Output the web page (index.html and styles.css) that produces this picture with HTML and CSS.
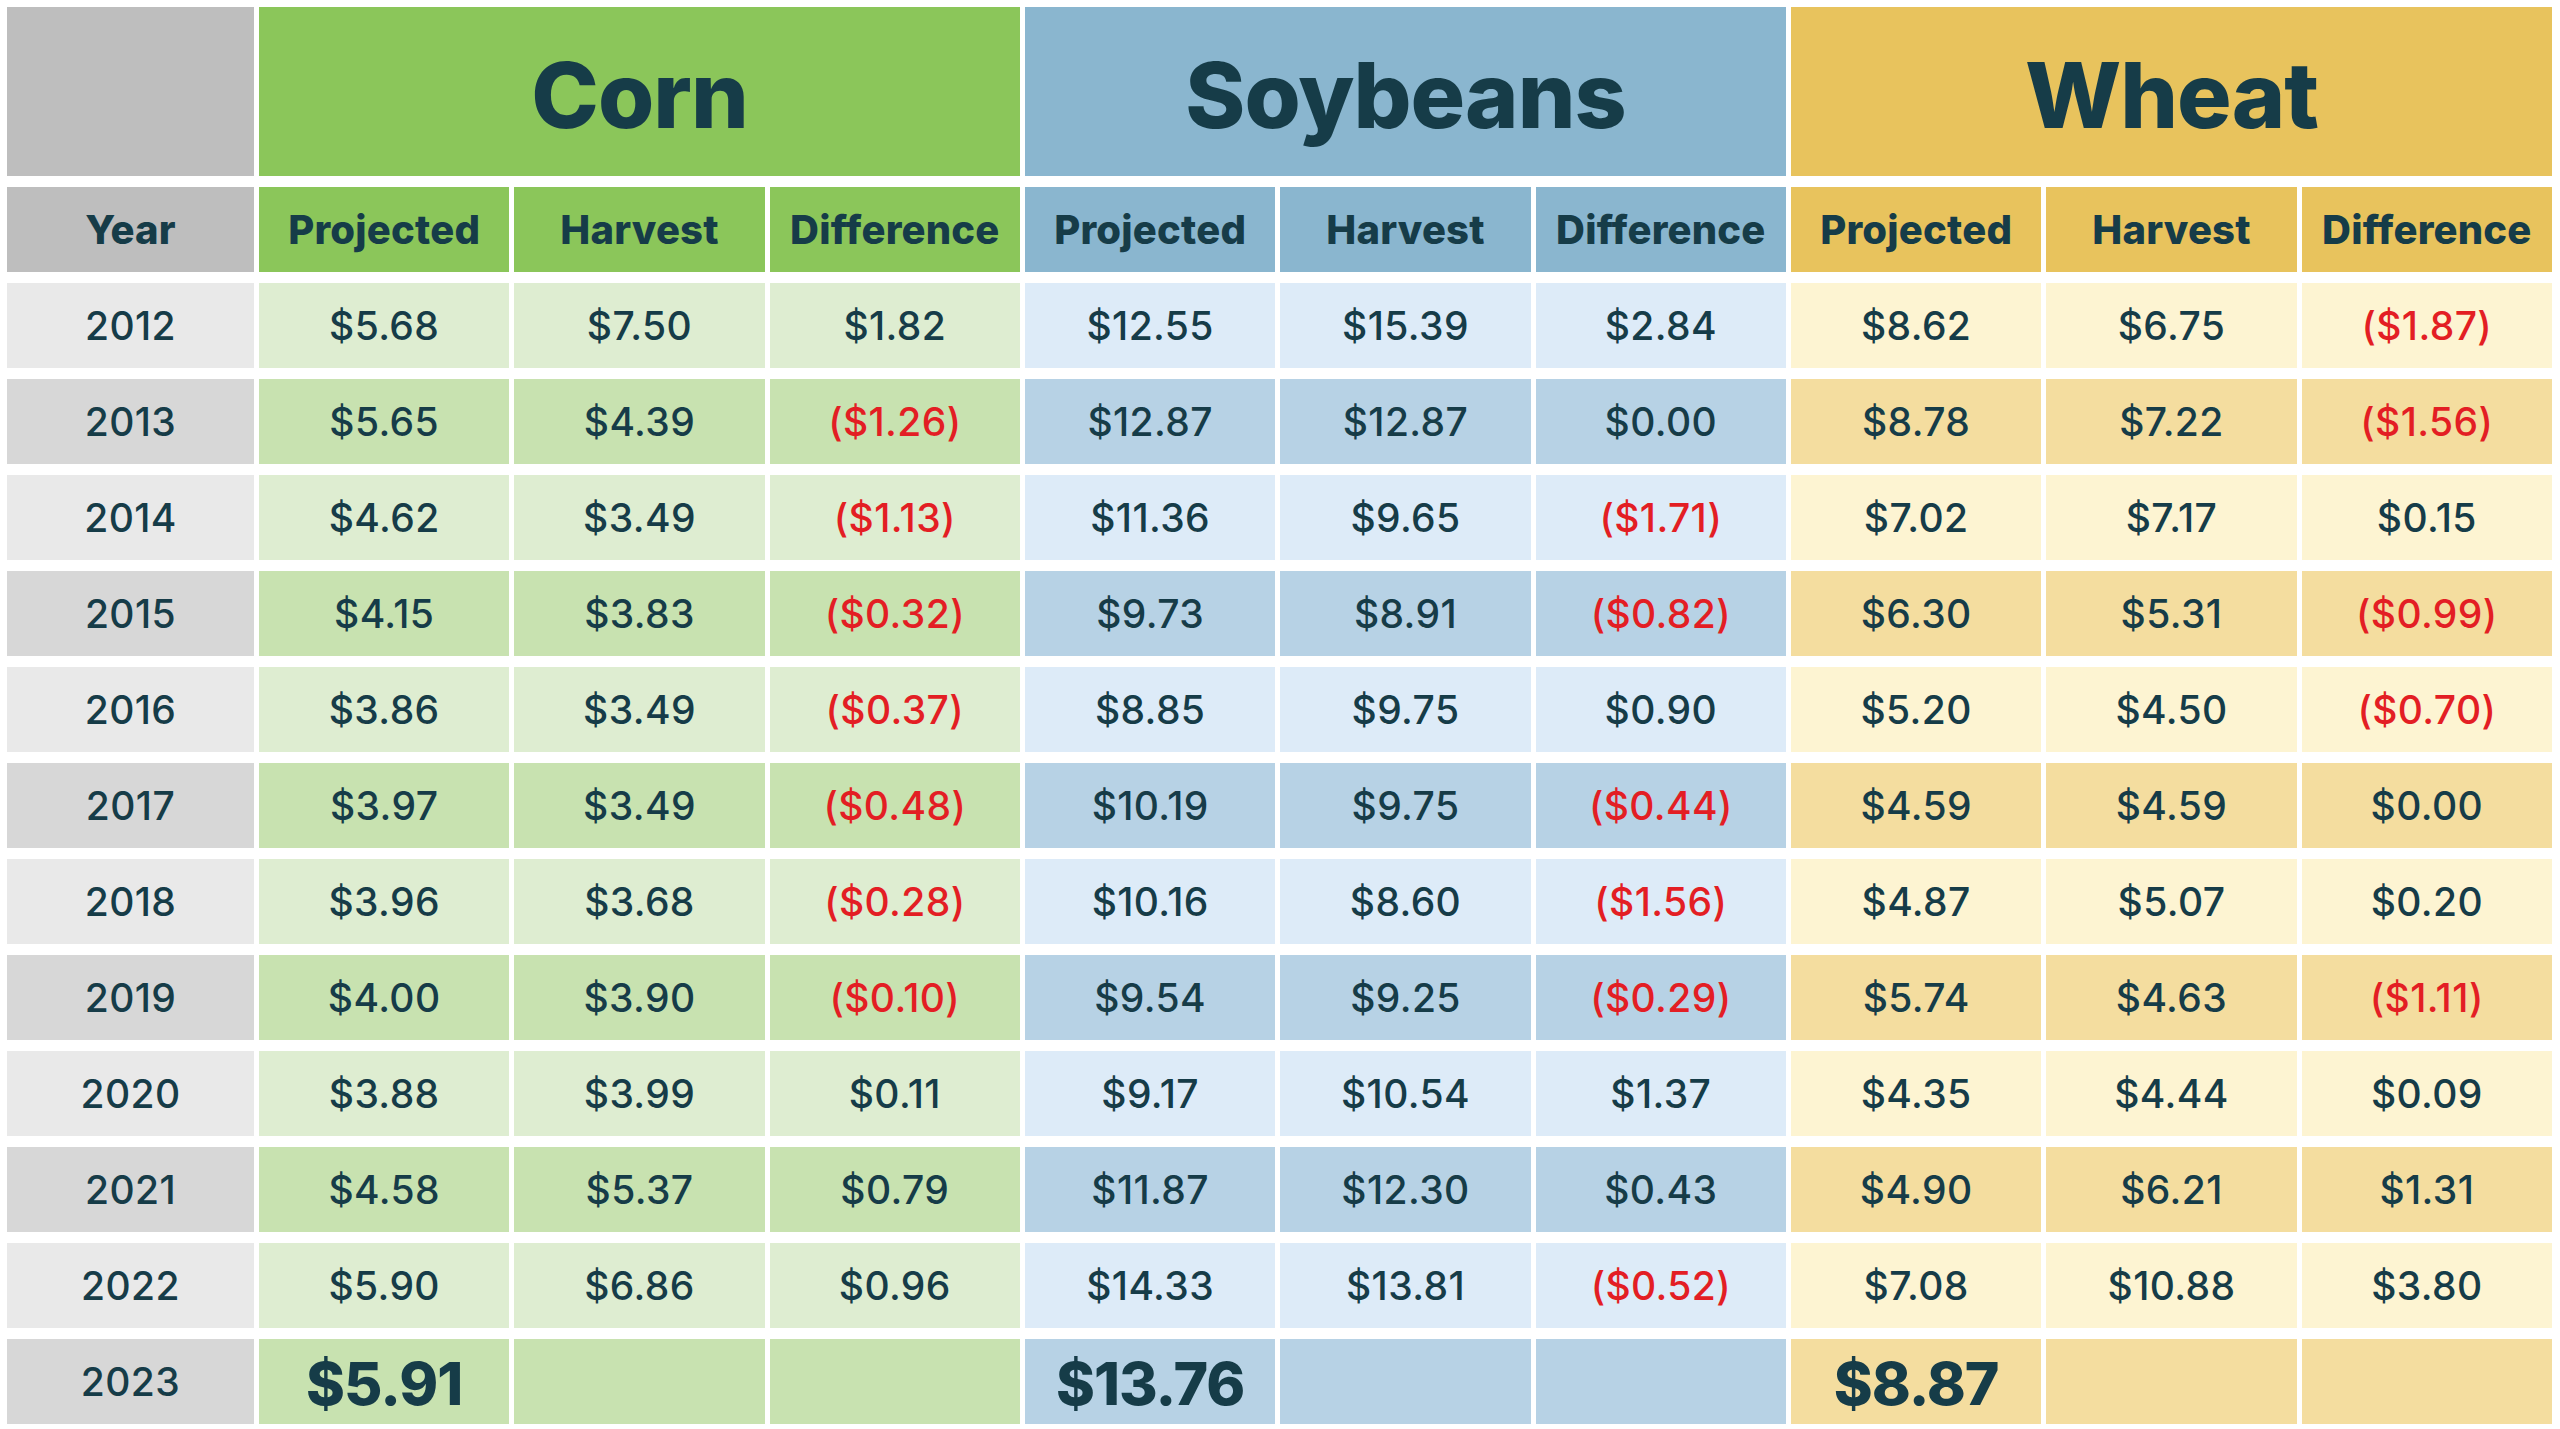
FILE: index.html
```html
<!DOCTYPE html>
<html lang="en">
<head>
<meta charset="utf-8">
<title>Projected vs Harvest Prices</title>
<link rel="stylesheet" href="styles.css">
</head>
<body>
<div class="table">
  <div class="cell title year-h"></div>
  <div class="cell title corn-h span3">Corn</div>
  <div class="cell title soy-h span3">Soybeans</div>
  <div class="cell title wheat-h span3">Wheat</div>

  <div class="cell head year-h">Year</div>
  <div class="cell head corn-h">Projected</div>
  <div class="cell head corn-h">Harvest</div>
  <div class="cell head corn-h">Difference</div>
  <div class="cell head soy-h">Projected</div>
  <div class="cell head soy-h">Harvest</div>
  <div class="cell head soy-h">Difference</div>
  <div class="cell head wheat-h">Projected</div>
  <div class="cell head wheat-h">Harvest</div>
  <div class="cell head wheat-h">Difference</div>

  <div class="cell yr light">2012</div>
  <div class="cell corn light">$5.68</div><div class="cell corn light">$7.50</div><div class="cell corn light">$1.82</div>
  <div class="cell soy light">$12.55</div><div class="cell soy light">$15.39</div><div class="cell soy light">$2.84</div>
  <div class="cell wheat light">$8.62</div><div class="cell wheat light">$6.75</div><div class="cell wheat light neg">($1.87)</div>

  <div class="cell yr dark">2013</div>
  <div class="cell corn dark">$5.65</div><div class="cell corn dark">$4.39</div><div class="cell corn dark neg">($1.26)</div>
  <div class="cell soy dark">$12.87</div><div class="cell soy dark">$12.87</div><div class="cell soy dark">$0.00</div>
  <div class="cell wheat dark">$8.78</div><div class="cell wheat dark">$7.22</div><div class="cell wheat dark neg">($1.56)</div>

  <div class="cell yr light">2014</div>
  <div class="cell corn light">$4.62</div><div class="cell corn light">$3.49</div><div class="cell corn light neg">($1.13)</div>
  <div class="cell soy light">$11.36</div><div class="cell soy light">$9.65</div><div class="cell soy light neg">($1.71)</div>
  <div class="cell wheat light">$7.02</div><div class="cell wheat light">$7.17</div><div class="cell wheat light">$0.15</div>

  <div class="cell yr dark">2015</div>
  <div class="cell corn dark">$4.15</div><div class="cell corn dark">$3.83</div><div class="cell corn dark neg">($0.32)</div>
  <div class="cell soy dark">$9.73</div><div class="cell soy dark">$8.91</div><div class="cell soy dark neg">($0.82)</div>
  <div class="cell wheat dark">$6.30</div><div class="cell wheat dark">$5.31</div><div class="cell wheat dark neg">($0.99)</div>

  <div class="cell yr light">2016</div>
  <div class="cell corn light">$3.86</div><div class="cell corn light">$3.49</div><div class="cell corn light neg">($0.37)</div>
  <div class="cell soy light">$8.85</div><div class="cell soy light">$9.75</div><div class="cell soy light">$0.90</div>
  <div class="cell wheat light">$5.20</div><div class="cell wheat light">$4.50</div><div class="cell wheat light neg">($0.70)</div>

  <div class="cell yr dark">2017</div>
  <div class="cell corn dark">$3.97</div><div class="cell corn dark">$3.49</div><div class="cell corn dark neg">($0.48)</div>
  <div class="cell soy dark">$10.19</div><div class="cell soy dark">$9.75</div><div class="cell soy dark neg">($0.44)</div>
  <div class="cell wheat dark">$4.59</div><div class="cell wheat dark">$4.59</div><div class="cell wheat dark">$0.00</div>

  <div class="cell yr light">2018</div>
  <div class="cell corn light">$3.96</div><div class="cell corn light">$3.68</div><div class="cell corn light neg">($0.28)</div>
  <div class="cell soy light">$10.16</div><div class="cell soy light">$8.60</div><div class="cell soy light neg">($1.56)</div>
  <div class="cell wheat light">$4.87</div><div class="cell wheat light">$5.07</div><div class="cell wheat light">$0.20</div>

  <div class="cell yr dark">2019</div>
  <div class="cell corn dark">$4.00</div><div class="cell corn dark">$3.90</div><div class="cell corn dark neg">($0.10)</div>
  <div class="cell soy dark">$9.54</div><div class="cell soy dark">$9.25</div><div class="cell soy dark neg">($0.29)</div>
  <div class="cell wheat dark">$5.74</div><div class="cell wheat dark">$4.63</div><div class="cell wheat dark neg">($1.11)</div>

  <div class="cell yr light">2020</div>
  <div class="cell corn light">$3.88</div><div class="cell corn light">$3.99</div><div class="cell corn light">$0.11</div>
  <div class="cell soy light">$9.17</div><div class="cell soy light">$10.54</div><div class="cell soy light">$1.37</div>
  <div class="cell wheat light">$4.35</div><div class="cell wheat light">$4.44</div><div class="cell wheat light">$0.09</div>

  <div class="cell yr dark">2021</div>
  <div class="cell corn dark">$4.58</div><div class="cell corn dark">$5.37</div><div class="cell corn dark">$0.79</div>
  <div class="cell soy dark">$11.87</div><div class="cell soy dark">$12.30</div><div class="cell soy dark">$0.43</div>
  <div class="cell wheat dark">$4.90</div><div class="cell wheat dark">$6.21</div><div class="cell wheat dark">$1.31</div>

  <div class="cell yr light">2022</div>
  <div class="cell corn light">$5.90</div><div class="cell corn light">$6.86</div><div class="cell corn light">$0.96</div>
  <div class="cell soy light">$14.33</div><div class="cell soy light">$13.81</div><div class="cell soy light neg">($0.52)</div>
  <div class="cell wheat light">$7.08</div><div class="cell wheat light">$10.88</div><div class="cell wheat light">$3.80</div>

  <div class="cell yr dark">2023</div>
  <div class="cell corn dark big">$5.91</div><div class="cell corn dark"></div><div class="cell corn dark"></div>
  <div class="cell soy dark big">$13.76</div><div class="cell soy dark"></div><div class="cell soy dark"></div>
  <div class="cell wheat dark big">$8.87</div><div class="cell wheat dark"></div><div class="cell wheat dark"></div>
</div>
</body>
</html>
```

FILE: styles.css
```css
* { box-sizing: border-box; }
html, body { margin: 0; padding: 0; background: #ffffff; }
body {
  padding: 7px 8px 5px 7px;
  font-family: Inter, Lato, "Liberation Sans", sans-serif;
  color: #163c48;
}
.table {
  display: grid;
  grid-template-columns: 247px repeat(9, 1fr);
  grid-template-rows: 169px;
  grid-auto-rows: 85px;
  column-gap: 5px;
  row-gap: 11px;
}
.cell {
  display: flex;
  align-items: center;
  justify-content: center;
  font-size: 39px;
  font-weight: 500;
  white-space: nowrap;
  letter-spacing: 0.4px;
}
.span3 { grid-column: span 3; }
.title {
  font-size: 91px;
  font-weight: 800;
  padding-top: 6px;
  letter-spacing: -1px;
}
.head { font-weight: 800; font-size: 40px; letter-spacing: 0.2px; }
.big { font-size: 59px; font-weight: 800; padding-top: 4px; letter-spacing: -1px; }
.neg { color: #e31e24; }

.year-h { background: #bebebe; }
.corn-h { background: #8bc65a; }
.soy-h { background: #8ab6cf; }
.wheat-h { background: #e8c35d; }

.yr.light { background: #e9e9e9; }
.yr.dark { background: #d7d7d7; }
.corn.light { background: #deedd1; }
.corn.dark { background: #c8e2b0; }
.soy.light { background: #ddebf8; }
.soy.dark { background: #b7d2e5; }
.wheat.light { background: #fdf4d2; }
.wheat.dark { background: #f4dd9f; }
```
